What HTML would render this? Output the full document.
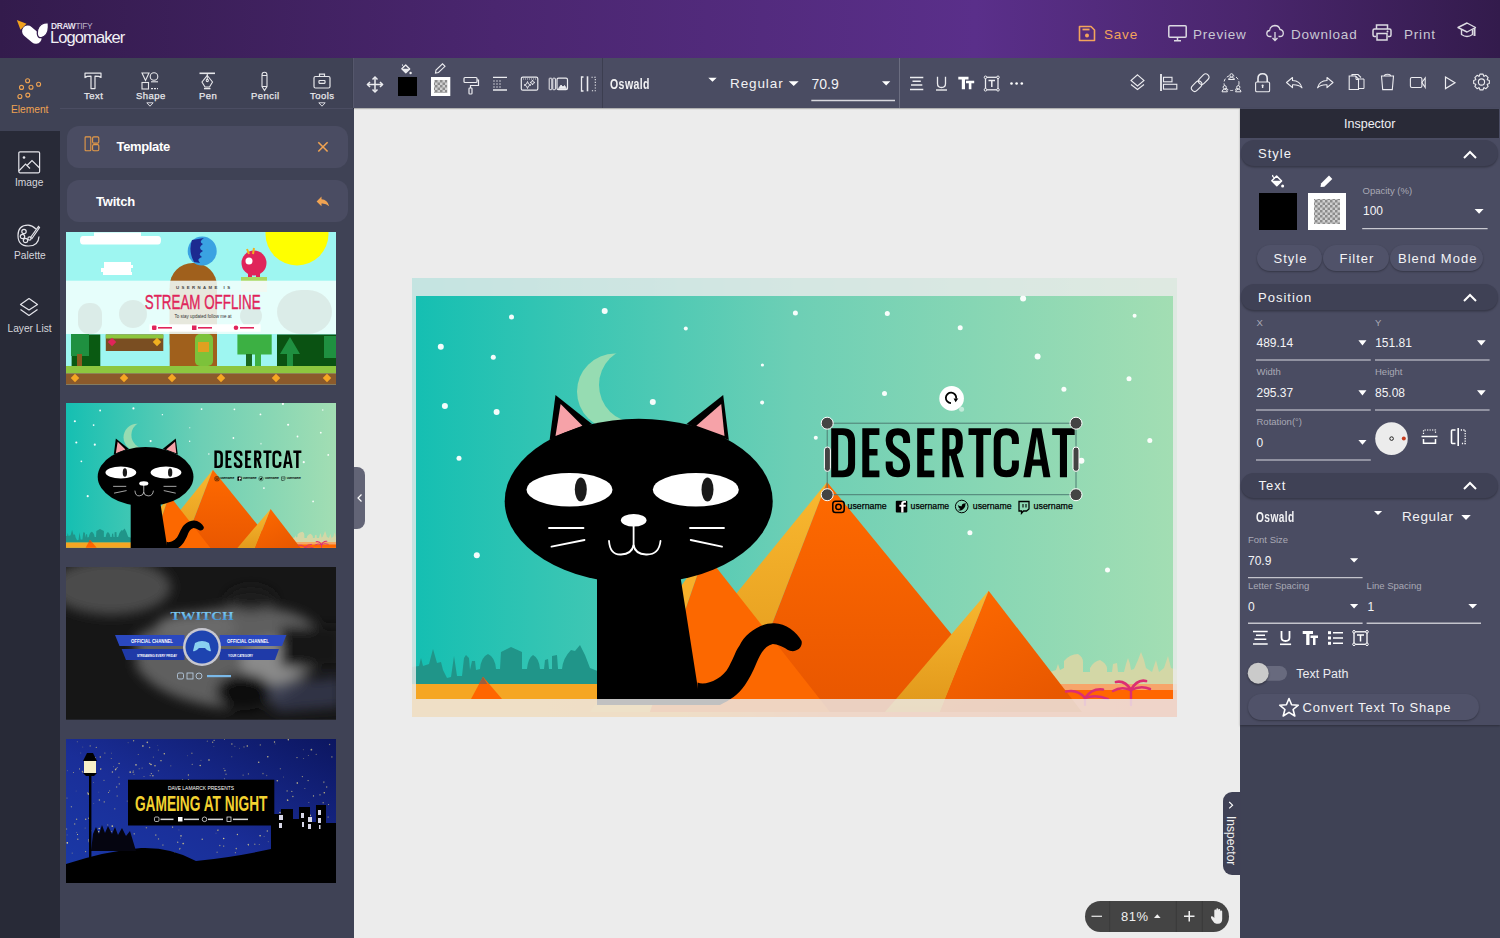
<!DOCTYPE html>
<html><head><meta charset="utf-8">
<style>
*{margin:0;padding:0;box-sizing:border-box}
html,body{width:1500px;height:938px;overflow:hidden;background:#ececec;font-family:"Liberation Sans",sans-serif}
.a{position:absolute}
#hdr{left:0;top:0;width:1500px;height:58px;background:linear-gradient(90deg,#331b4c 0%,#4a266f 33%,#5a2f8a 65%,#4a266d 83%,#331b4c 100%)}
#tb{left:353px;top:58px;width:1147px;height:50px;background:#4a4c62;box-shadow:0 1px 1px rgba(0,0,0,.25)}
#lp{left:60px;top:58px;width:294px;height:880px;background:#3f4255}
#ls{left:0;top:58px;width:60px;height:880px;background:#3f4255}
#lsd{left:0;top:131px;width:60px;height:807px;background:#282a37}
#ins{left:1240px;top:108px;width:260px;height:830px;background:#3f4255}
#insTop{left:1240px;top:108px;width:260px;height:617px;background:#4a4c62;box-shadow:0 1px 2px rgba(0,0,0,.3)}
.t{position:absolute;white-space:nowrap;line-height:1}
.lb{font-size:9.5px;color:#e8e8ec;letter-spacing:0.45px;-webkit-text-stroke:0.25px #e8e8ec}
.ls{font-size:10.2px;color:#d6d6dc}
.sh{background:#3f4155;border-radius:13px;box-shadow:0 1.5px 2px rgba(0,0,0,.28)}
.ih{font-size:13px;color:#f4f4f6;letter-spacing:1px}
.btn{background:#505269;border-radius:13px;box-shadow:0 1px 2px rgba(0,0,0,.3)}
.ib{font-size:13px;color:#f4f4f6;letter-spacing:1px}
.il{font-size:9.5px;color:#a9a9b5}
.iv{font-size:12px;color:#f4f4f6}
.hl{color:#c9c7d3;font-size:13px;letter-spacing:0.8px}
</style></head><body><svg width="0" height="0" style="position:absolute"><defs><pattern id="chk" width="5" height="5" patternUnits="userSpaceOnUse"><rect width="5" height="5" fill="#d0d0d0"/><rect width="2.5" height="2.5" fill="#8c8c8c"/><rect x="2.5" y="2.5" width="2.5" height="2.5" fill="#8c8c8c"/></pattern></defs></svg>
<div id="hdr" class="a"></div>
<div id="ls" class="a"></div>
<div id="lsd" class="a"></div>
<div id="lp" class="a"></div>
<div id="tb" class="a"></div>
<div id="ins" class="a"></div>
<div id="insTop" class="a"></div>

<!-- HEADER -->
<svg class="a" style="left:14px;top:18px" width="40" height="30" viewBox="0 0 40 30">
 <path d="M2.8 2 L12.5 5.8 L6.5 11.8 Z" fill="#f2a21f"/>
 <rect x="7" y="11" width="22" height="11.5" rx="5.75" transform="rotate(40 18 16.5)" fill="#fff"/>
 <path d="M23.3 15.8 Q22.8 7.5 30.5 5 L34.3 4.6 L34.4 9 Q34.3 17.5 27.5 19.6 Q23.8 20.2 23.3 15.8 Z" fill="#fff" stroke="#361d50" stroke-width="1.3"/>
</svg>
<div class="t" style="left:51px;top:21.8px;font-size:8.4px;color:#e6e1ee;font-weight:bold;letter-spacing:-0.3px">DRAW<span style="color:#bdb3c9;font-weight:normal">TIFY</span></div>
<div class="t" id="logoT" style="left:50px;top:28.6px;font-size:16.5px;color:#f2f0f5;letter-spacing:-0.9px">Logomaker</div>

<svg class="a" style="left:1078px;top:25px" width="18" height="17" viewBox="0 0 18 17" fill="none" stroke="#f3a45c" stroke-width="1.6">
 <path d="M1.5 1.5 H13 L16.5 5 V15.5 H1.5 Z" stroke-linejoin="round"/>
 <path d="M4.5 4.5 H11.5" stroke-width="1.8"/>
 <circle cx="9" cy="10.5" r="2" fill="#f3a45c" stroke="none"/>
</svg>
<div class="t hl" id="tSave" style="left:1104px;top:28.3px;font-size:13.5px;color:#f3a45c">Save</div>

<svg class="a" style="left:1168px;top:25px" width="19" height="17" viewBox="0 0 19 17" fill="none" stroke="#dcdae2" stroke-width="1.5">
 <rect x="0.8" y="0.8" width="17.4" height="11.4" rx="1"/>
 <path d="M9.5 12.5 V15.5 M6 15.8 H13"/>
</svg>
<div class="t hl" id="tPrev" style="left:1193px;top:28.3px;font-size:13.5px">Preview</div>

<svg class="a" style="left:1266px;top:24px" width="18" height="18" viewBox="0 0 18 18" fill="none" stroke="#dcdae2" stroke-width="1.3">
 <path d="M5.5 12.5 H4 Q0.8 12.5 0.8 9.5 Q0.8 6.8 3.6 6.5 Q4 2 8.8 1.5 Q13 1.5 14 5.5 Q17.3 6 17.3 9.2 Q17.2 12.5 14 12.5 H12.5"/>
 <path d="M9 8 V16.5 M6.5 14 L9 16.5 L11.5 14"/>
</svg>
<div class="t hl" id="tDown" style="left:1291px;top:28.3px;font-size:13.5px">Download</div>

<svg class="a" style="left:1372px;top:24px" width="20" height="17" viewBox="0 0 20 17" fill="none" stroke="#dcdae2" stroke-width="1.5">
 <path d="M4.5 5 V1 H15.5 V5"/>
 <path d="M4 12.5 H2.5 Q1 12.5 1 11 V6.5 Q1 5 2.5 5 H17.5 Q19 5 19 6.5 V11 Q19 12.5 17.5 12.5 H16"/>
 <rect x="5" y="9.5" width="10" height="6.5"/>
 <circle cx="15.5" cy="7.5" r="1" fill="#dcdae2" stroke="none"/>
</svg>
<div class="t hl" id="tPrint" style="left:1404px;top:28.3px;font-size:13.5px">Print</div>

<svg class="a" style="left:1457px;top:22px" width="20" height="17" viewBox="0 0 20 17" fill="none" stroke="#dcdae2" stroke-width="1.4" stroke-linejoin="round">
 <path d="M1 5.5 L10 1 L18.5 5.5 L10 10 Z"/>
 <path d="M4.5 7.5 V12.5 Q10 16.5 15.5 12.5 V7.5"/>
 <path d="M17.5 6 V14" stroke-width="2"/>
</svg>

<!-- LEFT TOOLS -->
<div class="a" style="left:60px;top:108px;width:293px;height:1px;background:#4b4d62"></div>
<svg class="a" style="left:15px;top:76px" width="30" height="25" viewBox="15 76 30 25" fill="none" stroke="#f0a352" stroke-width="1.1">
 <circle cx="27.6" cy="80.8" r="2"/><circle cx="38.6" cy="84.2" r="2"/><circle cx="21.5" cy="87.4" r="2"/>
 <circle cx="31" cy="87.2" r="2"/><circle cx="19.9" cy="96.5" r="2"/><circle cx="27.8" cy="95.1" r="2"/>
</svg>
<div class="t" id="lEl" style="left:11px;top:105.2px;font-size:10.2px;color:#f0a352">Element</div>

<svg class="a" style="left:84px;top:72px" width="18" height="18" viewBox="0 0 18 18" fill="none" stroke="#e6e6ea" stroke-width="1.2" stroke-linejoin="round">
 <path d="M1 1.2 H17 V5.5 Q15.5 4.2 11 4.2 V16.6 H7 V4.2 Q2.5 4.2 1 5.5 Z"/>
</svg>
<div class="t lb" id="lTxt" style="left:84px;top:90.6px">Text</div>

<svg class="a" style="left:141px;top:72px" width="18" height="18" viewBox="0 0 18 18" fill="none" stroke="#e6e6ea" stroke-width="1.1">
 <path d="M1 1 H8 L4.5 8.5 Z"/><circle cx="13" cy="4.5" r="3.8"/>
 <path d="M10 9.8 H17"/><rect x="1" y="10.5" width="6.5" height="6.5"/><path d="M10 16.6 H17" stroke-dasharray="2 1"/>
</svg>
<div class="t lb" id="lShp" style="left:136px;top:90.6px">Shape</div>
<svg class="a" style="left:146px;top:102px" width="8" height="5" viewBox="0 0 8 5"><path d="M0.8 0.8 H7.2 L4 4.2 Z" fill="none" stroke="#d8d8de" stroke-width="1"/></svg>

<svg class="a" style="left:199px;top:72px" width="17" height="18" viewBox="0 0 17 18" fill="none" stroke="#e6e6ea" stroke-width="1.1">
 <path d="M0.5 1.3 H16" stroke-width="1.6"/><path d="M8.3 1.5 V7.5"/><circle cx="8.3" cy="8.5" r="1.1"/>
 <path d="M8.3 3.5 L13.5 10 L10.5 15 H6 L3 10 Z"/><path d="M5 16.6 H11.5" stroke-width="1.4"/>
</svg>
<div class="t lb" id="lPen" style="left:199px;top:90.6px">Pen</div>

<svg class="a" style="left:260px;top:71px" width="9" height="21" viewBox="0 0 9 21" fill="none" stroke="#e6e6ea" stroke-width="1.1">
 <path d="M2 4 Q2 1.2 4.5 1.2 Q7 1.2 7 4 V15.5 L4.5 19.5 L2 15.5 Z"/><path d="M2 4.5 H7 M2 15.5 H7"/>
</svg>
<div class="t lb" id="lPcl" style="left:251px;top:90.6px">Pencil</div>

<svg class="a" style="left:313px;top:73px" width="18" height="16" viewBox="0 0 18 16" fill="none" stroke="#e6e6ea" stroke-width="1.2">
 <rect x="1" y="3.5" width="16" height="11.5" rx="1.5"/><path d="M6.5 3.5 V1.2 H11.5 V3.5"/><rect x="6" y="7.5" width="6" height="2.8" rx="0.5"/>
</svg>
<div class="t lb" id="lTls" style="left:310px;top:90.6px">Tools</div>
<svg class="a" style="left:318px;top:102px" width="8" height="5" viewBox="0 0 8 5"><path d="M0.8 0.8 H7.2 L4 4.2 Z" fill="none" stroke="#d8d8de" stroke-width="1"/></svg>

<!-- LEFT SIDEBAR -->
<svg class="a" style="left:18px;top:151px" width="23" height="23" viewBox="0 0 23 23" fill="none" stroke="#e4e4ea" stroke-width="1.2">
 <rect x="0.8" y="0.8" width="20.8" height="21" rx="1.2"/><circle cx="6" cy="6.5" r="1.3" fill="#e4e4ea" stroke="none"/>
 <path d="M0.8 20 L7.5 13 L12 17.5 M9 14.5 L14 9.5 L21.6 17"/>
</svg>
<div class="t ls" id="sImg" style="left:15px;top:178px">Image</div>
<svg class="a" style="left:17px;top:224px" width="24" height="24" viewBox="0 0 24 24" fill="none" stroke="#e4e4ea" stroke-width="1.2">
 <path d="M19 5 Q15 1.2 11 1.2 Q1 1.2 1 11.5 Q1 22 11.5 22 Q21.5 22 22 12.5"/>
 <circle cx="7" cy="7.5" r="2.2"/><circle cx="5.5" cy="12.5" r="2.2"/><circle cx="8.5" cy="16.5" r="2.2"/><circle cx="12.5" cy="14.5" r="1.6"/>
 <path d="M13.5 13.5 L21.5 2.5 L22.5 3.5 L15 14.5 Z"/>
</svg>
<div class="t ls" id="sPal" style="left:14px;top:251px">Palette</div>
<svg class="a" style="left:19px;top:297px" width="20" height="22" viewBox="0 0 20 22" fill="none" stroke="#e4e4ea" stroke-width="1.2" stroke-linejoin="round">
 <path d="M10 1.5 L18.5 7.5 L10 13 L1.5 7.5 Z"/><path d="M1.5 12.5 L10 18.5 L18.5 12.5"/>
</svg>
<div class="t ls" id="sLay" style="left:7.5px;top:324px">Layer List</div>

<!-- CANVAS SCENE -->
<svg class="a" style="left:412px;top:278px" width="765" height="439" viewBox="412 278 765 439">
<defs>
 <linearGradient id="sky" x1="0" y1="0" x2="1" y2="0"><stop offset="0" stop-color="#14bfb2"/><stop offset=".5" stop-color="#6dcfb5"/><stop offset="1" stop-color="#a3deb3"/></linearGradient>
 <linearGradient id="yel" x1="0" y1="0" x2="0" y2="1"><stop offset="0" stop-color="#f9b830"/><stop offset="1" stop-color="#e0971a"/></linearGradient>
 <linearGradient id="org" x1="0" y1="0" x2="1" y2="1"><stop offset="0" stop-color="#ff6c00"/><stop offset="1" stop-color="#e65200"/></linearGradient>
</defs>
<g id="dcScene"><rect x="412" y="278" width="765" height="439" fill="url(#sky)"/>
<!-- ground under -->
<linearGradient id="sand" x1="0" y1="0" x2="1" y2="0"><stop offset="0" stop-color="#ffa820"/><stop offset=".35" stop-color="#ffa020"/><stop offset=".55" stop-color="#ff7a30"/><stop offset="1" stop-color="#ff6a30"/></linearGradient><rect x="412" y="699" width="765" height="18" fill="url(#sand)"/>
<circle cx="511.5" cy="316.9" r="2.5" fill="#fff" opacity=".95"/><circle cx="604.7" cy="311" r="3" fill="#fff" opacity=".95"/><circle cx="440.8" cy="346.8" r="3" fill="#fff" opacity=".95"/><circle cx="493.3" cy="357.3" r="2.5" fill="#fff" opacity=".95"/><circle cx="685.8" cy="328.4" r="2" fill="#fff" opacity=".95"/><circle cx="795.4" cy="313" r="2.5" fill="#fff" opacity=".95"/><circle cx="762.4" cy="365" r="1.6" fill="#fff" opacity=".95"/><circle cx="444.9" cy="406" r="3" fill="#fff" opacity=".95"/><circle cx="496.6" cy="412" r="3" fill="#fff" opacity=".95"/><circle cx="652.8" cy="401.9" r="3" fill="#fff" opacity=".95"/><circle cx="762.1" cy="402.6" r="2" fill="#fff" opacity=".95"/><circle cx="459" cy="458.2" r="2.5" fill="#fff" opacity=".95"/>
<circle cx="887.3" cy="313.5" r="2.5" fill="#fff" opacity=".95"/><circle cx="1023.1" cy="298.6" r="3" fill="#fff" opacity=".95"/><circle cx="960.2" cy="327.7" r="2.5" fill="#fff" opacity=".95"/><circle cx="1134.6" cy="315.7" r="2" fill="#fff" opacity=".95"/><circle cx="1037.6" cy="356.5" r="3" fill="#fff" opacity=".95"/><circle cx="1129" cy="378.7" r="2.5" fill="#fff" opacity=".95"/><circle cx="884.5" cy="393.4" r="2.5" fill="#fff" opacity=".95"/><circle cx="1063.9" cy="389.2" r="2.5" fill="#fff" opacity=".95"/><circle cx="961.6" cy="409.2" r="2.5" fill="#fff" opacity=".5"/><circle cx="815.8" cy="437.7" r="2" fill="#fff" opacity=".95"/><circle cx="1149.8" cy="440.5" r="2.5" fill="#fff" opacity=".95"/><circle cx="1081.4" cy="460.7" r="3" fill="#fff" opacity=".95"/><circle cx="969.9" cy="532.8" r="2.5" fill="#fff" opacity=".95"/><circle cx="1107.5" cy="569.9" r="2.5" fill="#fff" opacity=".95"/><circle cx="476.8" cy="555.2" r="3" fill="#fff" opacity=".95"/>
<!-- moon -->
<mask id="moonm"><rect x="412" y="278" width="765" height="439" fill="#fff"/><circle cx="636.7" cy="385" r="37.7" fill="#000"/></mask><circle cx="615" cy="391.5" r="38" fill="#96dcb2" mask="url(#moonm)"/>
<!-- left city -->
<path d="M412 684 V667 L419 666 L421 658 L423 666 L429 664 L433 649 L437 663 L441 662 L443 670 L447 678 L451 677 L454 656 L457 676 L462 676 L464 658 L466 655 L469 658 L470 670 L472 661 L475 661 L476 670 L480 669 Q481 657 488 654 Q495 657 496 669 L500 669 L501 652 L511 647 L522 652 L522 669 L527 669 Q528 658 533 655 Q539 658 540 669 L544 669 L545 660 L548 659 L549 669 L552 669 L552 656 L557 655 L558 669 L562 669 Q563 658 571 650 L575 651 L580 645 L585 655 L590 668 L600 672 L600 684 Z" fill="#209589"/>
<!-- small pyramid far left -->

<!-- right far city -->
<path d="M1050 690 V672 L1056 670 L1058 664 L1060 670 L1064 668 L1064 661 Q1070 654 1078 654 Q1083 657 1083 662 L1083 672 L1090 672 L1090 668 Q1094 661 1100 660 Q1106 663 1107 668 L1107 672 L1112 672 L1113 664 L1117 663 L1118 672 L1124 672 L1126 664 L1128 658 L1130 664 L1131 670 L1134 669 L1138 660 L1141 652 L1144 660 L1146 668 L1152 672 L1156 660 L1159 672 L1164 668 L1168 656 L1171 668 L1177 670 V690 Z" fill="#d3d7a6"/>
<!-- ground -->
<rect x="412" y="684" width="765" height="15" fill="#f5a623"/>
<rect x="1000" y="684" width="177" height="6" fill="#f7a56a"/>
<rect x="1000" y="690" width="177" height="9" fill="#ff6600"/>
<path d="M483 676.7 L471 699 L502 699 Z" fill="#ff6600"/><path d="M483 676.7 L478.8 684 L487.3 684 Z" fill="#9a5e40"/>
<!-- big pyramid -->
<linearGradient id="org2" x1="0" y1="0" x2="0" y2="1"><stop offset="0" stop-color="#ff6a00"/><stop offset="1" stop-color="#e85600"/></linearGradient>
<path d="M827 482 L640 712 L738 712 Z" fill="url(#yel)"/>
<path d="M827 482 L738 712 L1015 712 Z" fill="url(#org2)"/>
<!-- small left pyramid -->
<path d="M705 553 L590 712 L650 712 Z" fill="#f7b02a"/>
<path d="M705 553 L650 712 L830 712 Z" fill="#fc6800"/>
<!-- small right pyramid -->
<path d="M988.6 590.8 L885 712 L940 712 Z" fill="url(#yel)"/>
<linearGradient id="org3" x1="0" y1="0" x2=".6" y2="1"><stop offset="0" stop-color="#ff6a00"/><stop offset="1" stop-color="#e85800"/></linearGradient><path d="M988.6 590.8 L940 712 L1082 712 Z" fill="url(#org3)"/>
<!-- palms -->
<g fill="none" stroke="#dc2f72" stroke-linecap="round">
 <path d="M1085 697 V705" stroke-width="2.2"/>
 <path d="M1085 698 Q1078 689 1066 691.5" stroke-width="2.6"/><path d="M1085 698 Q1092 688 1103 689.5" stroke-width="2.6"/>
 <path d="M1085 698 Q1096 694 1108 699" stroke-width="2.4"/>
 <path d="M1131 689 V705" stroke-width="2.4"/>
 <path d="M1131 690 Q1125 680 1116 682" stroke-width="2.8"/><path d="M1131 690 Q1137 679 1146 681" stroke-width="2.8"/>
 <path d="M1131 690 Q1121 686 1113 691" stroke-width="2.5"/><path d="M1131 690 Q1141 685 1150 689" stroke-width="2.5"/>
</g>
<!-- cat body -->
<path d="M597 560 L677.8 560 L700.5 705 L597 705 Z" fill="#000"/>
<path d="M697.6 682.5 C705 686 722 680 729 666.5 C734 657 736 650 739.7 645.2 C745 634 760 623 773.9 623.3 C785 623 797 632 801.6 641 C803 648 796 652 791 651 C786 650 783 645 772.8 644 C764 646 760 655 756.8 662.3 C753 672 749 679 745 685 C738 695 730 700 720 705 L697 705 Z" fill="#000"/>
<!-- ears -->
<path d="M555.5 395 L549.6 440 L592 424 Z" fill="#000"/>
<path d="M560.6 404 L555.5 436 L582.4 425.7 Z" fill="#f6a2a8"/>
<path d="M723.2 395 L728.8 440 L686.5 424 Z" fill="#000"/>
<path d="M721.2 404 L724.5 436 L696.3 425.7 Z" fill="#f6a2a8"/>
<!-- head -->
<ellipse cx="638.7" cy="501.2" rx="134" ry="82.4" fill="#000"/>
<ellipse cx="569.5" cy="489.7" rx="43" ry="16.7" fill="#fff"/>
<ellipse cx="695.8" cy="489.7" rx="43" ry="16.7" fill="#fff"/>
<ellipse cx="580.8" cy="489.5" rx="6" ry="12" fill="#1a1a1a"/>
<ellipse cx="707.5" cy="489.5" rx="6" ry="12" fill="#1a1a1a"/>
<ellipse cx="633.7" cy="520.3" rx="12.8" ry="6.3" fill="#fff"/>
<g stroke="#fff" stroke-width="1.8" fill="none" stroke-linecap="round">
 <path d="M633.6 524 V546"/>
 <path d="M609 541 Q610 555 621 554.5 Q632 554 633.6 545 Q635 554 646 554.5 Q659 555 660.5 541"/>
 <path d="M549 528 H583.5 M551.5 546.7 L584.5 540 M690 528 H724 M690.7 540 L722 546.7"/>
</g>
<!-- title -->
<g fill="#000" fill-rule="evenodd">
 <path d="M831.2 428.2 H843 Q855.1 428.2 855.1 441 V464.4 Q855.1 477.2 843 477.2 H831.2 Z M838.2 435 H842.2 Q848.1 435 848.1 442 V463.5 Q848.1 470.4 842.2 470.4 H838.2 Z"/>
 <path d="M862.3 428.2 H879.4 V435 H869.3 V449 H877.5 V455.6 H869.3 V470.4 H879.4 V477.2 H862.3 Z"/>
 <path d="M942.4 428.2 H953 Q962.8 428.2 962.8 440 V443 Q962.8 452 956.8 454.2 L964 477.2 H956.8 L950.6 455.8 H949.4 V477.2 H942.4 Z M949.4 435 H952.4 Q955.8 435 955.8 440 V444 Q955.8 449.2 952.4 449.2 H949.4 Z"/>
 <path d="M968.5 428.2 H991 V435 H983.3 V477.2 H976.2 V435 H968.5 Z"/>
 <path d="M1052.2 428.2 H1074.7 V435 H1067 V477.2 H1059.9 V435 H1052.2 Z"/>
 <path d="M1023.4 477.2 L1032.4 428.2 H1041.4 L1050.4 477.2 H1043.4 L1041.5 465.8 H1032.3 L1030.4 477.2 Z M1033.3 459.4 H1040.5 L1036.9 436.5 Z"/>
</g>
<path d="M917.2 428.2 H934.3 V435 H924.2 V449 H932.4 V455.6 H924.2 V470.4 H934.3 V477.2 H917.2 Z" fill="#000"/>
<g fill="none" stroke="#000" stroke-width="7">
 <path d="M906.6 443 V440 Q906.6 431.7 897.9 431.7 Q889.2 431.7 889.2 440.5 Q889.2 447.5 896 451.5 L900.5 454.5 Q906.6 458.5 906.6 465.5 Q906.6 473.7 897.9 473.7 Q889.2 473.7 889.2 465 V461.5"/>
 <path d="M1015.4 444 V440.5 Q1015.4 431.7 1006.3 431.7 Q997.2 431.7 997.2 440.5 V465 Q997.2 473.7 1006.3 473.7 Q1015.4 473.7 1015.4 465 V460.5"/>
</g>
<!-- social -->
<g fill="none" stroke="#000" stroke-width="1.5">
 <rect x="832.8" y="501.2" width="11.4" height="11.4" rx="2.8"/><circle cx="838.5" cy="506.9" r="2.7"/>
 <circle cx="961.7" cy="506.5" r="6.3" stroke-width="1"/>
 <path d="M1019 501.5 H1029 V509 L1026.5 511 H1023.5 L1021.5 513.2 V511 H1019 Z" stroke-width="1.3"/>
 <path d="M1023 504 V507.5 M1026 504 V507.5" stroke-width="1.1"/>
</g>
<rect x="895.8" y="500.8" width="11.5" height="11.8" rx="1" fill="#000"/>
<path d="M903.5 512.6 V506.8 H905.6 L905.9 504.8 H903.5 V503.6 Q903.5 502.8 904.4 502.8 H906 V501 H903.8 Q901.2 501 901.2 503.6 V504.8 H899.4 V506.8 H901.2 V512.6 Z" fill="#fff"/>
<path d="M957.8 505 Q960 506.5 961.7 506.3 Q961.8 503.2 964.8 503.6 L966 503 L965.4 504.2 Q965.6 508 962 510 Q959.5 511.2 957.5 509.8 Q959.5 509.8 960.5 508.9 Q958.3 508.2 958.4 506.5 Z" fill="#000"/>
<g font-family="Liberation Sans" font-size="9.6" fill="#000" stroke="#000" stroke-width="0.25">
 <text x="847.6" y="508.7" textLength="39" lengthAdjust="spacingAndGlyphs">username</text>
 <text x="910.6" y="508.7" textLength="38.6" lengthAdjust="spacingAndGlyphs">username</text>
 <text x="972.8" y="508.7" textLength="38.8" lengthAdjust="spacingAndGlyphs">username</text>
 <text x="1033.6" y="508.7" textLength="39.2" lengthAdjust="spacingAndGlyphs">username</text>
</g>
</g>
<!-- overlay outside artboard -->
<path d="M412 278 H1177 V717 H412 Z M416 296 V699 H1173 V296 Z" fill="#ececec" opacity=".82" fill-rule="evenodd"/>
<!-- selection -->
<rect x="827.2" y="423.2" width="248.8" height="71.5" fill="none" stroke="#4d7d73" stroke-width="1"/>
<g fill="#444" stroke="#fff" stroke-width="1">
 <circle cx="827.2" cy="423.2" r="6"/><circle cx="1076" cy="423.2" r="6"/><circle cx="827.2" cy="494.7" r="6"/><circle cx="1076" cy="494.7" r="6"/>
 <rect x="824.4" y="447" width="6" height="24.4" rx="3"/><rect x="1073" y="447" width="6" height="24.4" rx="3"/>
</g>
<circle cx="951.6" cy="398.4" r="12.3" fill="#fff"/>
<path d="M951 403.1 A5.2 5.2 0 1 1 956.2 398.6" fill="none" stroke="#000" stroke-width="1.8"/>
<path d="M953.6 398.6 L958.3 398.6 L955.6 402.2 Z" fill="#000"/>
</svg>

<!-- MAIN TOOLBAR -->
<svg class="a" style="left:353px;top:58px" width="1147" height="50" viewBox="353 58 1147 50" fill="none" stroke="#ececf0" stroke-width="1.2">
 <line x1="353.5" y1="58" x2="353.5" y2="108" stroke="#55576c" stroke-width="1"/>
 <!-- move -->
 <path d="M375 77 V92 M367.5 84.5 H382.5" stroke-width="1.5"/>
 <path d="M372.5 79.5 L375 77 L377.5 79.5 M372.5 89.5 L375 92 L377.5 89.5 M370 82 L367.5 84.5 L370 87 M380 82 L382.5 84.5 L380 87" stroke-width="1.5"/>
 <!-- bucket -->
 <path d="M401.8 68.8 L405.7 65 L409.7 69 L405.8 72.8 Z" stroke-width="1.3" stroke-linejoin="round"/>
 <path d="M401.8 68.8 H409.7 L405.8 72.8 Z" fill="#ececf0" stroke="none"/>
 <path d="M403.8 66.8 L402.6 65.5 Q402.1 64.6 402.9 64.3" stroke-width="1"/><circle cx="410.6" cy="73" r="1.2" fill="#ececf0" stroke="none"/>
 <rect x="398" y="77" width="19" height="19" fill="#000" stroke="none"/>
 <!-- pencil -->
 <path d="M435.5 73 L436 70 L442.5 63.8 L445 66.3 L438.5 72.5 Z" stroke-width="1.1"/>
 <rect x="431" y="77" width="19.3" height="19" fill="#fff" stroke="none"/>
 <rect x="434" y="80" width="13.3" height="13" fill="url(#chk)" stroke="none"/>
 <!-- roller -->
 <rect x="464" y="77.5" width="13" height="5" rx="1"/><path d="M477 80 H478.5 V85.5 H470.5 V88"/><rect x="469" y="88" width="3" height="6" rx="0.8"/>
 <!-- lines -->
 <path d="M493 77.3 H507 M493 90 H507" stroke-width="1.3"/>
 <g fill="#ececf0" stroke="none"><circle cx="494" cy="81" r=".7"/><circle cx="497" cy="81" r=".7"/><circle cx="500" cy="81" r=".7"/><circle cx="494" cy="84" r=".7"/><circle cx="497" cy="84" r=".7"/><circle cx="500" cy="84" r=".7"/><circle cx="494" cy="87" r=".7"/><circle cx="497" cy="87" r=".7"/><circle cx="500" cy="87" r=".7"/></g>
 <!-- image sparkle -->
 <rect x="521.3" y="77.2" width="16.5" height="13" rx="1.5"/><path d="M523 79 H536" stroke-dasharray="1 1" stroke-width=".8"/>
 <path d="M527.5 81.5 L528.5 84 L531 85 L528.5 86 L527.5 88.5 L526.5 86 L524 85 L526.5 84 Z M532.5 80 L533.2 81.8 L535 82.5 L533.2 83.2 L532.5 85 L531.8 83.2 L530 82.5 L531.8 81.8 Z" stroke-width=".9"/>
 <!-- image bar -->
 <rect x="549.2" y="78.2" width="2.6" height="11.5" rx="0.5" stroke-width="1"/><rect x="552.8" y="78.2" width="2.6" height="11.5" rx="0.5" stroke-width="1"/>
 <rect x="557" y="78.2" width="10.5" height="11.5" rx="1.5"/><path d="M558.5 88.5 L561 85 L563 87 L564.5 85.5 L566.5 88.5 Z" fill="#ececf0" stroke-width=".8"/>
 <!-- split -->
 <path d="M583.5 77 H581.5 V91 H583.5" stroke-width="1.3"/><path d="M587.5 76.3 V91.3" stroke-width="1.6"/>
 <path d="M591.5 77.2 H595.3 V90.8 H591.5" stroke-dasharray="1.2 1.6" stroke-width="1.1"/>
 <line x1="602.5" y1="58" x2="602.5" y2="108" stroke="#3c3e50" stroke-width="1"/>
 <!-- triangles -->
 <path d="M708.3 77.7 H716.7 L712.5 81.8 Z M788.7 81.3 H798.7 L793.7 86 Z M882 81.3 H890.3 L886.2 85.5 Z" fill="#fff" stroke="none"/>
 <path d="M811.3 100.5 H895" stroke="#d8d8de" stroke-width="1.3"/>
 <line x1="899.5" y1="58" x2="899.5" y2="108" stroke="#6b6d80" stroke-width="1"/>
 <!-- align center -->
 <path d="M910 77.5 H923.3 M912.5 81.3 H920.8 M911 85 H922.3 M910 89.5 H923.3" stroke-width="1.4"/>
 <!-- underline U -->
 <path d="M937.5 76.7 V83.5 Q937.5 87.5 941.5 87.5 Q945.5 87.5 945.5 83.5 V76.7" stroke-width="1.3"/><path d="M936 90 H947" stroke-width="1.4"/>
 <!-- TT -->
 <path d="M958.3 76.7 H968.5 V79.5 H965 V89.3 H961.8 V79.5 H958.3 Z M966 80.8 H974.2 V83.2 H971.4 V89.3 H968.8 V83.2 H966 Z" fill="#fff" stroke="none"/>
 <!-- T box -->
 <rect x="985.5" y="77.3" width="12.5" height="12.5" stroke-width="1.3"/>
 <g fill="#4a4c62" stroke-width="1"><circle cx="985.5" cy="77.3" r="1.3"/><circle cx="998" cy="77.3" r="1.3"/><circle cx="985.5" cy="89.8" r="1.3"/><circle cx="998" cy="89.8" r="1.3"/></g>
 <path d="M988.5 80.5 H995 M991.8 80.5 V87" stroke-width="1.5"/>
 <g fill="#fff" stroke="none"><circle cx="1011.5" cy="83.5" r="1.3"/><circle cx="1016.6" cy="83.5" r="1.3"/><circle cx="1021.8" cy="83.5" r="1.3"/></g>
 <!-- right icons -->
 <path d="M1137.5 74.8 L1144 80.5 L1137.5 86 L1131 80.5 Z" stroke-width="1.1"/><path d="M1131 84.5 L1137.5 89.5 L1144 84.5" stroke-width="1.1"/>
 <path d="M1161 74 V91" stroke-width="1.8"/><rect x="1163.5" y="77.3" width="8.5" height="4.5" stroke-width="1.1"/><rect x="1163.5" y="84.3" width="13.3" height="4.8" stroke-width="1.1"/>
 <g transform="rotate(-45 1200 82.5)" stroke-width="1.1"><rect x="1189" y="79.5" width="12" height="6.5" rx="3.25"/><rect x="1199" y="79.5" width="12" height="6.5" rx="3.25"/></g>
 <circle cx="1231.5" cy="83" r="7.5" stroke-dasharray="3 2" stroke-width="1"/>
 <g fill="#4a4c62" stroke-width="1"><circle cx="1231.5" cy="75.3" r="1.6"/><path d="M1228.5 79.5 Q1228.5 77.5 1231.5 77.5 Q1234.5 77.5 1234.5 79.5 Z"/><circle cx="1224.7" cy="87.2" r="1.6"/><path d="M1222 91.8 Q1222 89.3 1224.7 89.3 Q1227.4 89.3 1227.4 91.8 Z"/><circle cx="1238.3" cy="87.2" r="1.6"/><path d="M1235.6 91.8 Q1235.6 89.3 1238.3 89.3 Q1241 89.3 1241 91.8 Z"/></g>
 <rect x="1255.6" y="82" width="14" height="9.8" rx="1.3" stroke-width="1.1"/><path d="M1258 82 V78.5 Q1258 73.8 1262.6 73.8 Q1267.2 73.8 1267.2 78.5 V82" stroke-width="1.6"/><path d="M1262.6 85 V88" stroke-width="1.4"/><circle cx="1262.6" cy="85.5" r="1" fill="#ececf0" stroke="none"/>
 <path d="M1286.5 82.5 L1292.5 77.5 V80.5 Q1300 80.5 1302 87.8 Q1298.5 84.5 1292.5 84.8 V87.7 Z" stroke-width="1.1" stroke-linejoin="round"/>
 <path d="M1333 82.5 L1327 77.5 V80.5 Q1319.5 80.5 1317.5 87.8 Q1321 84.5 1327 84.8 V87.7 Z" stroke-width="1.1" stroke-linejoin="round"/>
 <path d="M1349.2 76 H1355.5 L1358.5 79 V89.5 H1349.2 Z M1352 76 V74.5 H1358 L1361 77.5" stroke-width="1.1"/><path d="M1356 76.2 V79.5 H1359 M1358.5 79 H1364 V88.5 H1358.5" stroke-width="1"/>
 <path d="M1381.5 76 H1393.5 L1392.3 89.6 H1382.7 Z" stroke-width="1.1"/><path d="M1384.5 76 Q1384.5 74.3 1387.5 74.3 Q1390.5 74.3 1390.5 76" stroke-width="1.1"/>
 <rect x="1410.4" y="77.5" width="11.5" height="10" rx="1.5" stroke-width="1.1"/><path d="M1421.9 82.5 L1425.2 78 V87.5 Z" stroke-width="1.1"/>
 <path d="M1445.5 77 L1455 82.8 L1445.5 88.6 Z" stroke-width="1.2"/>
 <circle cx="1481.5" cy="82" r="3.1" stroke-width="1.1"/>
 <path d="M1487.30 79.82 L1489.34 80.41 L1489.34 83.59 L1487.30 84.18 L1487.15 84.56 L1488.17 86.42 L1485.92 88.67 L1484.06 87.65 L1483.68 87.80 L1483.09 89.84 L1479.91 89.84 L1479.32 87.80 L1478.94 87.65 L1477.08 88.67 L1474.83 86.42 L1475.85 84.56 L1475.70 84.18 L1473.66 83.59 L1473.66 80.41 L1475.70 79.82 L1475.85 79.44 L1474.83 77.58 L1477.08 75.33 L1478.94 76.35 L1479.32 76.20 L1479.91 74.16 L1483.09 74.16 L1483.68 76.20 L1484.06 76.35 L1485.92 75.33 L1488.17 77.58 L1487.15 79.44 Z" stroke-width="1.1" stroke-linejoin="round"/>
</svg>
<div class="t" id="fOsw" style="left:610px;top:75.5px;font-size:15.5px;color:#f2f2f4;font-weight:bold;transform:scaleX(0.68);transform-origin:0 0;letter-spacing:0.6px">Oswald</div>
<div class="t" id="fReg" style="left:730px;top:77px;font-size:13.5px;color:#f2f2f4;letter-spacing:0.9px">Regular</div>
<div class="t" id="fSz" style="left:811.5px;top:76.5px;font-size:14px;color:#f2f2f4">70.9</div>

<!-- INSPECTOR -->
<div class="a" style="left:1240px;top:109px;width:259px;height:29px;background:#292a37"></div>
<div class="t" id="iHd" style="left:1344px;top:118px;font-size:12.5px;color:#f0f0f4">Inspector</div>
<div class="a sh" style="left:1241px;top:140px;width:257px;height:26px"></div>
<div class="t ih" id="iSty" style="left:1258px;top:147px">Style</div>
<div class="a sh" style="left:1241px;top:284px;width:257px;height:25.5px"></div>
<div class="t ih" id="iPos" style="left:1258px;top:291px">Position</div>
<div class="a sh" style="left:1241px;top:472.5px;width:257px;height:25.5px"></div>
<div class="t ih" id="iTxt" style="left:1258.5px;top:478.5px">Text</div>
<svg class="a" style="left:1240px;top:108px" width="260" height="620" viewBox="1240 108 260 620" fill="none" stroke="#fff">
 <path d="M1464 158 L1470 152 L1476 158 M1464 301 L1470 295 L1476 301 M1464 489 L1470 483 L1476 489" stroke-width="2"/>
 <!-- bucket -->
 <path d="M1271.8 180.8 L1276.6 176 L1281.6 181 L1276.8 185.8 Z" stroke-width="1.5" stroke-linejoin="round"/>
 <path d="M1271.8 180.8 H1281.6 L1276.8 185.8 Z" fill="#fff" stroke="none"/>
 <path d="M1274.5 178.2 L1272.8 176.5 Q1272.2 175.5 1273.2 175.2" stroke-width="1.2"/>
 <circle cx="1282.6" cy="186" r="1.5" fill="#fff" stroke="none"/>
 <path d="M1320.5 187 L1321 183.6 L1329 175.6 L1332.3 178.9 L1324.3 186.8 Z" fill="#fff" stroke="none"/>
 <rect x="1259" y="193" width="38" height="37" fill="#000" stroke="none"/>
 <rect x="1308" y="193" width="38" height="37" fill="#fff" stroke="none"/>
 <rect x="1314" y="199" width="26" height="25" fill="url(#chk)" stroke="none"/>
 <path d="M1474.6 209 H1483.6 L1479.1 213.7 Z" fill="#fff" stroke="none"/>
 <path d="M1362.2 228.6 H1487.6" stroke="#c8c8d0" stroke-width="1.3"/>
 <!-- position triangles + underlines -->
 <g fill="#fff" stroke="none">
  <path d="M1358.4 340.3 H1366.5 L1362.45 345.5 Z M1477 340.3 H1485.7 L1481.35 345.5 Z"/>
  <path d="M1358.4 390.3 H1366.5 L1362.45 395.5 Z M1477 390.3 H1485.7 L1481.35 395.5 Z"/>
  <path d="M1358.4 440 H1366.5 L1362.45 444.8 Z"/>
  <path d="M1374 511 H1382.1 L1378 515.1 Z M1461.3 515.1 H1470.8 L1466 519.9 Z"/>
  <path d="M1350 558.2 H1358.2 L1354.1 562.6 Z M1350 604 H1358.2 L1354.1 608.4 Z M1468.3 604 H1477.1 L1472.7 608.4 Z"/>
 </g>
 <g stroke="#a9a9b6" stroke-width="1.6">
  <path d="M1256 360 H1370.8 M1375 360 H1489.6 M1256 410 H1370.8 M1375 410 H1489.6 M1256 460 H1370.8"/>
 </g>
 <g stroke="#c4c4cc" stroke-width="1.4">
  <path d="M1248 577.6 H1362.6 M1248 623.3 H1362.6 M1366.6 623.3 H1481"/>
 </g>
 <!-- dial -->
 <circle cx="1391.5" cy="438.6" r="16.3" fill="#ececec" stroke="none"/>
 <circle cx="1391.6" cy="438.6" r="1.8" stroke="#222" stroke-width="1"/>
 <circle cx="1403.8" cy="438.6" r="2" fill="#c83c1e" stroke="none"/>
 <!-- distribute -->
 <path d="M1421.5 436.5 H1437.5" stroke-width="1.5"/>
 <path d="M1423.5 434 V430 H1435.5 V434" stroke-width="1.2" stroke-dasharray="1.3 1.2"/>
 <path d="M1423.5 439 V443.3 H1435.5 V439" stroke-width="1.5"/>
 <!-- flip -->
 <path d="M1458.2 428 V446" stroke-width="1.6"/>
 <path d="M1455.5 430 H1452.3 Q1451.5 430 1451.5 431 V442.5 Q1451.5 443.5 1452.3 443.5 H1455.5" stroke-width="1.6"/>
 <path d="M1460.8 430 H1465.2 V443.5 H1460.8" stroke-width="1.3" stroke-dasharray="1.2 1.3"/>
 <!-- text icons -->
 <path d="M1253 631.5 H1267.7 M1256 635.3 H1265 M1254.5 639.2 H1266.3 M1253 644 H1267.7" stroke-width="1.6"/>
 <path d="M1281.5 631 V637.5 Q1281.5 641 1285.5 641 Q1289.5 641 1289.5 637.5 V631" stroke-width="1.8"/><path d="M1280 644.3 H1291.1" stroke-width="1.6"/>
 <path d="M1302.7 631 H1313 V634 H1309.5 V645 H1306.2 V634 H1302.7 Z M1310.5 635.5 H1318 V638 H1315.5 V645 H1313 V638 H1310.5 Z" fill="#fff" stroke="none"/>
 <g fill="#fff" stroke="none"><rect x="1328" y="631.2" width="3" height="3"/><rect x="1328" y="636.5" width="3" height="3"/><rect x="1328" y="641.8" width="3" height="3"/></g>
 <path d="M1333 632.7 H1343 M1333 638 H1343 M1333 643.3 H1343" stroke-width="1.6"/>
 <rect x="1354" y="631.8" width="13" height="12.5" stroke-width="1.3"/>
 <g fill="#4a4c62" stroke-width="1"><circle cx="1354" cy="631.8" r="1.3"/><circle cx="1367" cy="631.8" r="1.3"/><circle cx="1354" cy="644.3" r="1.3"/><circle cx="1367" cy="644.3" r="1.3"/></g>
 <path d="M1357 635 H1364 M1360.5 635 V641.5" stroke-width="1.5"/>
 <!-- toggle -->
 <rect x="1252" y="666" width="35" height="14.7" rx="7.35" fill="#686a7e" stroke="none"/>
 <circle cx="1258.2" cy="673.2" r="10.5" fill="#cacaca" stroke="none" style="filter:drop-shadow(0 1px 1px rgba(0,0,0,.4))"/>
</svg>
<div class="a btn" style="left:1256.5px;top:245px;width:65.3px;height:26px"></div>
<div class="a btn" style="left:1323.2px;top:245px;width:65.5px;height:26px"></div>
<div class="a btn" style="left:1389.9px;top:245px;width:92.7px;height:26px"></div>
<div class="t ib" id="bSty" style="left:1273.5px;top:252px">Style</div>
<div class="t ib" id="bFil" style="left:1339.5px;top:252px">Filter</div>
<div class="t ib" id="bBle" style="left:1398px;top:252px">Blend Mode</div>
<div class="t il" style="left:1362.5px;top:185.5px">Opacity (%)</div>
<div class="t iv" id="vOp" style="left:1363px;top:205px">100</div>
<div class="t il" style="left:1256.5px;top:317.5px">X</div>
<div class="t il" style="left:1375px;top:317.5px">Y</div>
<div class="t iv" id="vX" style="left:1256.5px;top:337px">489.14</div>
<div class="t iv" id="vY" style="left:1375.2px;top:337px">151.81</div>
<div class="t il" style="left:1256.5px;top:367px">Width</div>
<div class="t il" style="left:1375px;top:367px">Height</div>
<div class="t iv" id="vW" style="left:1256.5px;top:386.5px">295.37</div>
<div class="t iv" id="vH" style="left:1375px;top:386.5px">85.08</div>
<div class="t il" style="left:1256.5px;top:417px">Rotation(°)</div>
<div class="t iv" style="left:1256.5px;top:436.5px">0</div>
<div class="t" id="iOsw" style="left:1255.5px;top:509px;font-size:15px;color:#f2f2f4;font-weight:bold;transform:scaleX(0.68);transform-origin:0 0;letter-spacing:0.6px">Oswald</div>
<div class="t" id="iReg" style="left:1402px;top:509.5px;font-size:13.5px;color:#f2f2f4;letter-spacing:0.6px">Regular</div>
<div class="t il" style="left:1248px;top:535px">Font Size</div>
<div class="t iv" style="left:1248px;top:554.5px">70.9</div>
<div class="t il" style="left:1248px;top:581px">Letter Spacing</div>
<div class="t il" style="left:1366.6px;top:581px">Line Spacing</div>
<div class="t iv" style="left:1248px;top:600.5px">0</div>
<div class="t iv" style="left:1367.5px;top:600.5px">1</div>
<div class="t" id="tPath" style="left:1296.3px;top:667.5px;font-size:12.5px;color:#ececf0">Text Path</div>
<div class="a btn" style="left:1247.8px;top:694.2px;width:231.4px;height:26px"></div>
<svg class="a" style="left:1278px;top:697px" width="22" height="21" viewBox="0 0 22 21"><path d="M11 1.5 L13.6 7.8 L20.3 8.2 L15.1 12.5 L16.8 19 L11 15.4 L5.2 19 L6.9 12.5 L1.7 8.2 L8.4 7.8 Z" fill="none" stroke="#fff" stroke-width="1.6" stroke-linejoin="round"/></svg>
<div class="t ib" id="bConv" style="left:1302.4px;top:700.5px;letter-spacing:0.85px">Convert Text To Shape</div>

<!-- LEFT PANEL CARDS -->
<div class="a" style="left:66.5px;top:126px;width:281.5px;height:42px;background:#4a4c62;border-radius:12px"></div>
<div class="a" style="left:66.5px;top:180px;width:281.5px;height:42px;background:#4a4c62;border-radius:12px"></div>
<svg class="a" style="left:84px;top:136px" width="16" height="16" viewBox="84 136 16 16" fill="none" stroke="#e59a48" stroke-width="1.1">
 <rect x="85.1" y="136.9" width="5.7" height="13.8" rx=".8"/><rect x="92.6" y="136.9" width="6.2" height="6.2" rx="1.2"/><rect x="92.6" y="144.6" width="6.2" height="6.1" rx="1.2"/>
</svg>
<div class="t" id="cTpl" style="left:116.5px;top:139.5px;font-size:13px;color:#fff;font-weight:bold;letter-spacing:-0.35px">Template</div>
<svg class="a" style="left:316px;top:140px" width="14" height="14" viewBox="316 140 14 14"><path d="M318.3 142.3 L327.6 151.5 M327.6 142.3 L318.3 151.5" stroke="#f0a352" stroke-width="1.6"/></svg>
<div class="t" id="cTw" style="left:96px;top:194.5px;font-size:13px;color:#fff;font-weight:bold;letter-spacing:-0.2px">Twitch</div>
<svg class="a" style="left:316px;top:195px" width="14" height="12" viewBox="316 195 14 12"><path d="M316.6 201.5 L321.5 196.4 V199.2 Q327.5 199.5 329.2 206.2 Q326 203.3 321.5 203.6 V206.3 Z" fill="#f0a352"/></svg>


<!-- THUMBNAILS -->
<svg class="a" style="left:65.7px;top:232px" width="270.6" height="152.6" viewBox="0 0 270.6 152.6">
 <rect width="270.6" height="152.6" fill="#9ef6f1"/>
 <path d="M17 4 H28 V0.5 H75 V4 H92 Q95 4 95 8 Q95 12.6 92 12.6 H17 Q14 12.6 14 8.5 Q14 4 17 4 Z" fill="#fff"/>
 <path d="M38 30 H65 V33 H67 V36 H65 V40 H66 V43 H37 V40 H35 V36 H38 Z" fill="#fff"/>
 <circle cx="231" cy="2" r="31.5" fill="#ffff00"/>
 <rect x="103.7" y="31" width="47.3" height="103" rx="23" fill="#a0601c"/>
 <rect x="103.7" y="56" width="47.3" height="78" fill="#a0601c"/>
 <circle cx="136.2" cy="19.1" r="14.5" fill="#3aa2e2"/><path d="M126 8 Q122 19 128 30 L134 31 Q130 27 136 25 Q131 22 137 19 Q131 16 137 12 Q132 10 138 6 Z" fill="#1c2a90"/>
 <circle cx="188" cy="31" r="12.5" fill="#e0245a"/><rect x="182" y="36" width="4" height="9" fill="#e0245a"/><rect x="190" y="36" width="4" height="9" fill="#e0245a"/>
 <circle cx="183" cy="29" r="3.5" fill="#fff"/><path d="M181 17 L183 22 M188 16 L187 22" stroke="#f0b020" stroke-width="2"/>
 <rect x="175" y="45" width="26" height="4" fill="#a8d860"/><rect x="175" y="49" width="26" height="11" fill="#e8d0b0"/>
 <rect x="5.6" y="102.5" width="28.7" height="31.5" fill="#0a5a12"/><rect x="5" y="102" width="18" height="22" fill="#1f9040"/><rect x="11" y="122" width="5" height="12" fill="#8a5a20"/>
 <rect x="39.8" y="102.5" width="57.5" height="16.5" fill="#7a4e22"/><rect x="39.8" y="102.5" width="57.5" height="4" fill="#8cc63f"/>
 <rect x="43" y="107" width="6" height="6" transform="rotate(45 46 110)" fill="#e0245a"/><rect x="88" y="107" width="6" height="6" transform="rotate(45 91 110)" fill="#f0b020"/>
 <rect x="129" y="102" width="18" height="32" rx="5" fill="#7cc23a"/><rect x="132" y="110" width="11" height="10" fill="#e0a020"/>
 <rect x="171.4" y="102.5" width="34.3" height="20" fill="#3cb043"/><rect x="180" y="122" width="6" height="12" fill="#1a6a20"/><rect x="189" y="122" width="6" height="12" fill="#3cb043"/>
 <rect x="211" y="102.5" width="59.6" height="31.5" fill="#0a5212"/><path d="M221 134 V122 H214 L224 105 L234 122 H227 V134 Z" fill="#1f9040"/><rect x="258" y="104" width="12.6" height="22" fill="#1f9040"/>
 <rect x="0" y="48.7" width="270.6" height="53.3" fill="#f2fffd" opacity=".86"/>
 <g opacity=".22" fill="#b8b0a8"><rect x="12" y="71" width="24" height="31" rx="11"/><circle cx="67" cy="82" r="14"/><rect x="211" y="58" width="55" height="44" rx="24"/><circle cx="185" cy="84" r="11"/></g>
 <text x="110" y="57.3" font-family="Liberation Sans" font-size="4.3" font-weight="bold" fill="#444" textLength="54" lengthAdjust="spacing">USERNAME IS</text>
 <text x="78.8" y="77.5" font-family="Liberation Sans" font-size="20.5" fill="#e0245a" textLength="115.8" lengthAdjust="spacingAndGlyphs" stroke="#e0245a" stroke-width=".4">STREAM OFFLINE</text>
 <text x="108.4" y="86" font-family="Liberation Sans" font-size="4.6" fill="#333" textLength="57" lengthAdjust="spacingAndGlyphs">To stay updated follow me at</text>
 <rect x="83.4" y="92.3" width="111.2" height="7.4" fill="#fff"/>
 <g fill="#e0245a"><rect x="86" y="93.5" width="4.5" height="4.5" rx="1"/><rect x="126" y="93.5" width="4.5" height="4.5"/><circle cx="170" cy="95.8" r="2.3"/>
 <rect x="92" y="95" width="14" height="1.6"/><rect x="132" y="95" width="14" height="1.6"/><rect x="174" y="95" width="14" height="1.6"/></g>
 <rect x="0" y="134" width="270.6" height="7.3" fill="#8dc63f"/>
 <rect x="0" y="141.3" width="270.6" height="11.3" fill="#8b5a2b"/>
 <g fill="#f5a623"><rect x="6" y="143" width="6" height="6" transform="rotate(45 9 146)"/><rect x="55" y="143" width="6" height="6" transform="rotate(45 58 146)"/><rect x="103" y="143" width="6" height="6" transform="rotate(45 106 146)"/><rect x="152" y="143" width="6" height="6" transform="rotate(45 155 146)"/><rect x="207" y="143" width="6" height="6" transform="rotate(45 210 146)"/><rect x="258" y="143" width="6" height="6" transform="rotate(45 261 146)"/></g>
</svg>

<svg class="a" style="left:65.5px;top:403px" width="270.5" height="144.8" viewBox="416 296 757 403" preserveAspectRatio="none">
 <use href="#dcScene"/>
</svg>

<svg class="a" style="left:65.7px;top:567.2px" width="270.6" height="152.7" viewBox="0 0 270.6 152.7">
 <defs>
  <radialGradient id="g3a" cx=".25" cy=".1" r=".6"><stop offset="0" stop-color="#6a6a6a"/><stop offset="1" stop-color="#202020"/></radialGradient>
  <radialGradient id="g3b" cx=".5" cy=".5" r=".5"><stop offset="0" stop-color="#9a9a9a"/><stop offset=".7" stop-color="#6a6a6a"/><stop offset="1" stop-color="#3a3a3a" stop-opacity="0"/></radialGradient>
  <linearGradient id="g3c" x1="0" y1="0" x2="0" y2="1"><stop offset="0" stop-color="#9ee8ff"/><stop offset="1" stop-color="#2a80d0"/></linearGradient>
 </defs>
 <filter id="bl3" x="-20%" y="-20%" width="140%" height="140%"><feGaussianBlur stdDeviation="6"/></filter>
 <rect width="270.6" height="152.7" fill="#161616"/>
 <g filter="url(#bl3)">
  <ellipse cx="45" cy="20" rx="60" ry="28" fill="#4c4c4c"/>
  <path d="M70 70 Q110 45 170 40 Q230 38 250 60 Q265 90 230 120 Q200 145 150 140 Q90 130 70 100 Z" fill="#5e5e5e"/>
  <ellipse cx="205" cy="95" rx="30" ry="22" fill="#8a8a8a"/>
  <ellipse cx="130" cy="60" rx="40" ry="14" fill="#6a6a6a"/>
  <ellipse cx="185" cy="32" rx="24" ry="12" fill="#1a1a1a"/>
  <ellipse cx="178" cy="125" rx="28" ry="18" fill="#101010"/>
  <rect x="215" y="60" width="60" height="40" fill="#121212"/>
  <path d="M200 118 L275 110 V140 L210 145 Z" fill="#3a3f58" opacity=".7"/>
 </g>
 <text x="104.6" y="53.1" font-family="Liberation Serif" font-weight="bold" font-size="13.5" fill="url(#g3c)" textLength="63" lengthAdjust="spacingAndGlyphs">TWITCH</text>
 <path d="M49 68 H118.5 V79 H53.5 Z" fill="#2a48c0"/><path d="M55.6 81.9 H118.5 V93 H60 Z" fill="#1f3aa8"/>
 <path d="M153.7 68 H220.4 L216 79 H153.7 Z" fill="#2a48c0"/><path d="M153.7 81.9 H213 L209 93 H153.7 Z" fill="#1f3aa8"/>
 <circle cx="136" cy="80" r="19" fill="#c8c8d0"/><circle cx="136" cy="80" r="16.5" fill="#1e44b0"/>
 <path d="M129 76 Q136 72 143 76 L145 84 Q142 85 139 81 H133 Q130 85 127 84 Z" fill="#8ad0f0"/>
 <g fill="#fff" font-family="Liberation Sans" font-weight="bold">
  <text x="65" y="76.5" font-size="6" textLength="42" lengthAdjust="spacingAndGlyphs">OFFICIAL CHANNEL</text>
  <text x="161" y="76.5" font-size="6" textLength="42" lengthAdjust="spacingAndGlyphs">OFFICIAL CHANNEL</text>
  <text x="71" y="90" font-size="4" textLength="40" lengthAdjust="spacingAndGlyphs">STREAMING EVERY FRIDAY</text>
  <text x="162" y="90" font-size="4" textLength="25" lengthAdjust="spacingAndGlyphs">YOUR CATEGORY</text>
 </g>
 <g fill="none" stroke="#c0d8f0" stroke-width=".8"><rect x="111.5" y="106" width="6" height="6" rx="1.5"/><rect x="121" y="106" width="6" height="6"/><circle cx="133" cy="109" r="3"/></g>
 <rect x="141" y="108" width="24" height="2.2" fill="#7ab8e8"/>
</svg>

<svg class="a" style="left:65.7px;top:738.6px" width="270.6" height="144" viewBox="0 0 270.6 144">
 <defs>
  <linearGradient id="g4a" x1="0" y1="1" x2="1" y2="0"><stop offset="0" stop-color="#1a3aa8"/><stop offset=".45" stop-color="#1a2e98"/><stop offset="1" stop-color="#0c1660"/></linearGradient>
 </defs>
 <rect width="270.6" height="144" fill="url(#g4a)"/>
 <circle cx="64.3" cy="59.9" r="0.58" fill="#e8d890" opacity="0.77"/><circle cx="168.9" cy="7.2" r="0.41" fill="#e8d890" opacity="0.88"/><circle cx="70.0" cy="25.8" r="0.90" fill="#e8d890" opacity="0.71"/><circle cx="225.8" cy="52.4" r="0.72" fill="#e8d890" opacity="0.57"/><circle cx="171.4" cy="95.5" r="0.66" fill="#e8d890" opacity="0.83"/><circle cx="181.3" cy="7.0" r="0.78" fill="#e8d890" opacity="0.77"/><circle cx="81.3" cy="3.4" r="0.83" fill="#e8d890" opacity="0.71"/><circle cx="194.1" cy="96.7" r="0.76" fill="#e8d890" opacity="0.91"/><circle cx="106.6" cy="88.1" r="0.62" fill="#e8d890" opacity="0.92"/><circle cx="237.3" cy="10.7" r="0.47" fill="#e8d890" opacity="0.60"/><circle cx="260.7" cy="48.0" r="0.71" fill="#e8d890" opacity="0.64"/><circle cx="137.0" cy="42.4" r="0.58" fill="#e8d890" opacity="0.76"/><circle cx="157.7" cy="99.5" r="0.74" fill="#e8d890" opacity="0.92"/><circle cx="231.2" cy="109.0" r="0.74" fill="#e8d890" opacity="0.57"/><circle cx="232.4" cy="106.1" r="0.85" fill="#e8d890" opacity="0.76"/><circle cx="192.7" cy="23.2" r="0.82" fill="#e8d890" opacity="0.76"/><circle cx="76.9" cy="7.0" r="0.83" fill="#e8d890" opacity="0.95"/><circle cx="23.9" cy="88.1" r="0.61" fill="#e8d890" opacity="0.57"/><circle cx="79.4" cy="84.6" r="0.84" fill="#e8d890" opacity="0.52"/><circle cx="165.9" cy="4.9" r="0.76" fill="#e8d890" opacity="0.65"/><circle cx="237.8" cy="107.9" r="0.65" fill="#e8d890" opacity="0.95"/><circle cx="83.6" cy="8.5" r="0.70" fill="#e8d890" opacity="0.51"/><circle cx="53.3" cy="44.9" r="0.71" fill="#e8d890" opacity="0.57"/><circle cx="11.5" cy="95.5" r="0.56" fill="#e8d890" opacity="0.93"/><circle cx="242.1" cy="41.6" r="0.63" fill="#e8d890" opacity="0.73"/><circle cx="173.8" cy="65.5" r="0.68" fill="#e8d890" opacity="0.78"/><circle cx="254.0" cy="55.8" r="0.62" fill="#e8d890" opacity="0.82"/><circle cx="64.2" cy="33.1" r="0.89" fill="#e8d890" opacity="0.73"/><circle cx="148.1" cy="1.3" r="0.61" fill="#e8d890" opacity="0.76"/><circle cx="5.4" cy="67.7" r="0.72" fill="#e8d890" opacity="0.53"/><circle cx="169.4" cy="51.3" r="0.74" fill="#e8d890" opacity="0.66"/><circle cx="190.9" cy="81.2" r="0.41" fill="#e8d890" opacity="0.53"/><circle cx="182.5" cy="106.0" r="0.53" fill="#e8d890" opacity="0.71"/><circle cx="160.0" cy="35.2" r="0.58" fill="#e8d890" opacity="0.64"/><circle cx="99.7" cy="65.5" r="0.55" fill="#e8d890" opacity="0.67"/><circle cx="208.5" cy="3.0" r="0.68" fill="#e8d890" opacity="0.83"/><circle cx="83.7" cy="24.5" r="0.80" fill="#e8d890" opacity="0.61"/><circle cx="50.6" cy="47.9" r="0.75" fill="#e8d890" opacity="0.55"/><circle cx="86.9" cy="36.7" r="0.82" fill="#e8d890" opacity="0.70"/><circle cx="231.0" cy="18.6" r="0.57" fill="#e8d890" opacity="0.79"/><circle cx="238.9" cy="49.6" r="0.51" fill="#e8d890" opacity="0.55"/><circle cx="143.0" cy="21.0" r="0.80" fill="#e8d890" opacity="0.88"/><circle cx="49.6" cy="30.6" r="0.80" fill="#e8d890" opacity="0.79"/><circle cx="217.7" cy="38.0" r="0.46" fill="#e8d890" opacity="0.63"/><circle cx="214.3" cy="29.8" r="0.57" fill="#e8d890" opacity="0.69"/><circle cx="113.3" cy="45.0" r="0.86" fill="#e8d890" opacity="0.57"/><circle cx="1.3" cy="103.8" r="0.84" fill="#e8d890" opacity="0.94"/><circle cx="117.3" cy="104.5" r="0.86" fill="#e8d890" opacity="0.60"/><circle cx="201.3" cy="92.0" r="0.73" fill="#e8d890" opacity="0.73"/><circle cx="78.0" cy="37.5" r="0.51" fill="#e8d890" opacity="0.53"/><circle cx="158.9" cy="31.6" r="0.81" fill="#e8d890" opacity="0.52"/><circle cx="244.0" cy="76.3" r="0.86" fill="#e8d890" opacity="0.90"/><circle cx="242.9" cy="63.5" r="0.41" fill="#e8d890" opacity="0.84"/><circle cx="46.4" cy="33.0" r="0.73" fill="#e8d890" opacity="0.74"/><circle cx="111.7" cy="103.3" r="0.71" fill="#e8d890" opacity="0.65"/><circle cx="68.2" cy="94.8" r="0.64" fill="#e8d890" opacity="0.85"/><circle cx="95.0" cy="21.7" r="0.67" fill="#e8d890" opacity="0.87"/><circle cx="46.3" cy="87.1" r="0.86" fill="#e8d890" opacity="0.86"/><circle cx="222.3" cy="0.8" r="0.71" fill="#e8d890" opacity="0.89"/><circle cx="13.5" cy="29.9" r="0.53" fill="#e8d890" opacity="0.74"/><circle cx="114.2" cy="52.0" r="0.79" fill="#e8d890" opacity="0.50"/><circle cx="14.8" cy="14.0" r="0.46" fill="#e8d890" opacity="0.53"/><circle cx="263.2" cy="94.0" r="0.44" fill="#e8d890" opacity="0.73"/><circle cx="85.3" cy="34.6" r="0.58" fill="#e8d890" opacity="0.79"/><circle cx="158.4" cy="39.7" r="0.50" fill="#e8d890" opacity="0.65"/><circle cx="33.4" cy="61.1" r="0.76" fill="#e8d890" opacity="0.67"/><circle cx="21.6" cy="19.6" r="0.59" fill="#e8d890" opacity="0.77"/><circle cx="211.3" cy="41.8" r="0.80" fill="#e8d890" opacity="0.78"/><circle cx="116.5" cy="41.0" r="0.65" fill="#e8d890" opacity="0.82"/><circle cx="113.5" cy="76.4" r="0.63" fill="#e8d890" opacity="0.61"/><circle cx="144.7" cy="76.5" r="0.44" fill="#e8d890" opacity="0.69"/><circle cx="115.0" cy="96.8" r="0.87" fill="#e8d890" opacity="0.67"/><circle cx="242.4" cy="87.0" r="0.53" fill="#e8d890" opacity="0.71"/><circle cx="33.2" cy="89.5" r="0.73" fill="#e8d890" opacity="0.90"/><circle cx="214.0" cy="73.4" r="0.77" fill="#e8d890" opacity="0.75"/><circle cx="27.8" cy="64.7" r="0.40" fill="#e8d890" opacity="0.56"/><circle cx="209.1" cy="4.9" r="0.45" fill="#e8d890" opacity="0.54"/><circle cx="237.7" cy="19.7" r="0.41" fill="#e8d890" opacity="0.88"/><circle cx="32.7" cy="92.8" r="0.74" fill="#e8d890" opacity="0.88"/><circle cx="257.2" cy="63.7" r="0.80" fill="#e8d890" opacity="0.52"/><circle cx="207.2" cy="56.2" r="0.76" fill="#e8d890" opacity="0.55"/><circle cx="202.2" cy="102.8" r="0.43" fill="#e8d890" opacity="0.65"/><circle cx="152.3" cy="91.1" r="0.52" fill="#e8d890" opacity="0.58"/><circle cx="67.5" cy="67.8" r="0.78" fill="#e8d890" opacity="0.68"/><circle cx="99.2" cy="43.6" r="0.58" fill="#e8d890" opacity="0.69"/><circle cx="22.5" cy="55.0" r="0.89" fill="#e8d890" opacity="0.69"/><circle cx="201.8" cy="17.7" r="0.75" fill="#e8d890" opacity="0.84"/><circle cx="181.9" cy="56.9" r="0.64" fill="#e8d890" opacity="0.79"/><circle cx="242.3" cy="16.4" r="0.45" fill="#e8d890" opacity="0.84"/><circle cx="247.5" cy="56.9" r="0.62" fill="#e8d890" opacity="0.82"/><circle cx="50.2" cy="29.4" r="0.50" fill="#e8d890" opacity="0.76"/><circle cx="85.0" cy="25.6" r="0.75" fill="#e8d890" opacity="0.93"/><circle cx="79.9" cy="77.6" r="0.61" fill="#e8d890" opacity="0.88"/><circle cx="157.9" cy="29.4" r="0.51" fill="#e8d890" opacity="0.51"/><circle cx="129.5" cy="42.1" r="0.49" fill="#e8d890" opacity="0.66"/><circle cx="87.0" cy="85.2" r="0.47" fill="#e8d890" opacity="0.95"/><circle cx="129.5" cy="65.9" r="0.63" fill="#e8d890" opacity="0.88"/><circle cx="221.8" cy="61.3" r="0.64" fill="#e8d890" opacity="0.82"/><circle cx="231.3" cy="44.0" r="0.77" fill="#e8d890" opacity="0.93"/><circle cx="126.2" cy="25.3" r="0.52" fill="#e8d890" opacity="0.82"/><circle cx="182.3" cy="105.5" r="0.83" fill="#e8d890" opacity="0.61"/><circle cx="51.2" cy="28.4" r="0.49" fill="#e8d890" opacity="0.82"/><circle cx="231.8" cy="99.0" r="0.53" fill="#e8d890" opacity="0.89"/><circle cx="84.6" cy="46.6" r="0.76" fill="#e8d890" opacity="0.54"/><circle cx="25.0" cy="91.7" r="0.55" fill="#e8d890" opacity="0.66"/><circle cx="156.7" cy="74.3" r="0.40" fill="#e8d890" opacity="0.65"/><circle cx="117.8" cy="53.4" r="0.51" fill="#e8d890" opacity="0.76"/><circle cx="257.9" cy="43.0" r="0.67" fill="#e8d890" opacity="0.55"/><circle cx="74.2" cy="73.2" r="0.46" fill="#e8d890" opacity="0.90"/><circle cx="245.4" cy="10.7" r="0.87" fill="#e8d890" opacity="0.67"/>
<circle cx="87.4" cy="18.1" r="0.66" fill="#d8c880" opacity="0.44"/><circle cx="144.7" cy="43.9" r="0.42" fill="#d8c880" opacity="0.65"/><circle cx="10.1" cy="52.0" r="0.43" fill="#d8c880" opacity="0.45"/><circle cx="114.6" cy="99.2" r="0.45" fill="#d8c880" opacity="0.51"/><circle cx="169.4" cy="113.7" r="0.63" fill="#d8c880" opacity="0.60"/><circle cx="263.6" cy="5.6" r="0.74" fill="#d8c880" opacity="0.54"/><circle cx="38.9" cy="14.1" r="0.52" fill="#d8c880" opacity="0.81"/><circle cx="48.8" cy="69.8" r="0.66" fill="#d8c880" opacity="0.59"/><circle cx="147.9" cy="7.5" r="0.42" fill="#d8c880" opacity="0.50"/><circle cx="183.7" cy="51.3" r="0.53" fill="#d8c880" opacity="0.69"/><circle cx="122.4" cy="36.0" r="0.72" fill="#d8c880" opacity="0.75"/><circle cx="65.9" cy="68.9" r="0.61" fill="#d8c880" opacity="0.84"/><circle cx="197.0" cy="34.6" r="0.79" fill="#d8c880" opacity="0.46"/><circle cx="112.9" cy="90.9" r="0.46" fill="#d8c880" opacity="0.64"/><circle cx="10.6" cy="80.2" r="0.71" fill="#d8c880" opacity="0.69"/><circle cx="236.4" cy="37.6" r="0.68" fill="#d8c880" opacity="0.70"/><circle cx="156.6" cy="54.7" r="0.74" fill="#d8c880" opacity="0.87"/><circle cx="128.0" cy="79.7" r="0.42" fill="#d8c880" opacity="0.75"/><circle cx="174.7" cy="119.2" r="0.73" fill="#d8c880" opacity="0.54"/><circle cx="104.2" cy="80.2" r="0.41" fill="#d8c880" opacity="0.63"/><circle cx="45.4" cy="14.1" r="0.42" fill="#d8c880" opacity="0.78"/><circle cx="34.9" cy="29.7" r="0.56" fill="#d8c880" opacity="0.84"/><circle cx="21.8" cy="53.9" r="0.62" fill="#d8c880" opacity="0.84"/><circle cx="221.2" cy="103.7" r="0.51" fill="#d8c880" opacity="0.61"/><circle cx="96.9" cy="106.1" r="0.78" fill="#d8c880" opacity="0.48"/><circle cx="47.6" cy="27.8" r="0.49" fill="#d8c880" opacity="0.64"/><circle cx="159.1" cy="31.5" r="0.40" fill="#d8c880" opacity="0.61"/><circle cx="99.7" cy="68.0" r="0.78" fill="#d8c880" opacity="0.75"/><circle cx="139.2" cy="74.1" r="0.67" fill="#d8c880" opacity="0.43"/><circle cx="242.9" cy="93.6" r="0.75" fill="#d8c880" opacity="0.80"/><circle cx="105.9" cy="47.9" r="0.44" fill="#d8c880" opacity="0.72"/><circle cx="16.8" cy="8.1" r="0.48" fill="#d8c880" opacity="0.48"/><circle cx="91.8" cy="6.3" r="0.40" fill="#d8c880" opacity="0.48"/><circle cx="27.4" cy="43.6" r="0.41" fill="#d8c880" opacity="0.84"/><circle cx="165.8" cy="17.8" r="0.50" fill="#d8c880" opacity="0.57"/><circle cx="98.3" cy="14.7" r="0.74" fill="#d8c880" opacity="0.90"/><circle cx="125.8" cy="58.1" r="0.43" fill="#d8c880" opacity="0.45"/><circle cx="92.5" cy="31.8" r="0.73" fill="#d8c880" opacity="0.48"/><circle cx="6.2" cy="114.1" r="0.61" fill="#d8c880" opacity="0.47"/><circle cx="146.7" cy="3.2" r="0.61" fill="#d8c880" opacity="0.89"/><circle cx="233.1" cy="83.5" r="0.50" fill="#d8c880" opacity="0.58"/><circle cx="45.1" cy="92.6" r="0.61" fill="#d8c880" opacity="0.79"/><circle cx="89.0" cy="26.8" r="0.72" fill="#d8c880" opacity="0.89"/><circle cx="230.2" cy="96.7" r="0.73" fill="#d8c880" opacity="0.77"/><circle cx="61.2" cy="62.1" r="0.54" fill="#d8c880" opacity="0.41"/><circle cx="7.5" cy="33.5" r="0.50" fill="#d8c880" opacity="0.75"/><circle cx="258.3" cy="53.7" r="0.77" fill="#d8c880" opacity="0.89"/><circle cx="257.9" cy="43.8" r="0.49" fill="#d8c880" opacity="0.51"/><circle cx="53.1" cy="24.5" r="0.65" fill="#d8c880" opacity="0.85"/><circle cx="226.9" cy="57.5" r="0.66" fill="#d8c880" opacity="0.80"/><circle cx="22.9" cy="79.3" r="0.76" fill="#d8c880" opacity="0.79"/><circle cx="202.5" cy="57.4" r="0.47" fill="#d8c880" opacity="0.79"/><circle cx="89.8" cy="96.1" r="0.79" fill="#d8c880" opacity="0.60"/><circle cx="108.4" cy="113.6" r="0.69" fill="#d8c880" opacity="0.49"/><circle cx="34.3" cy="18.1" r="0.76" fill="#d8c880" opacity="0.80"/><circle cx="39.5" cy="99.2" r="0.79" fill="#d8c880" opacity="0.73"/><circle cx="94.6" cy="65.8" r="0.45" fill="#d8c880" opacity="0.41"/><circle cx="262.1" cy="78.0" r="0.61" fill="#d8c880" opacity="0.87"/><circle cx="117.1" cy="104.6" r="0.73" fill="#d8c880" opacity="0.51"/><circle cx="68.0" cy="35.2" r="0.50" fill="#d8c880" opacity="0.69"/><circle cx="70.0" cy="50.3" r="0.45" fill="#d8c880" opacity="0.86"/><circle cx="95.5" cy="55.0" r="0.63" fill="#d8c880" opacity="0.85"/><circle cx="113.6" cy="110.1" r="0.60" fill="#d8c880" opacity="0.67"/><circle cx="141.3" cy="2.2" r="0.58" fill="#d8c880" opacity="0.49"/><circle cx="1.1" cy="95.9" r="0.47" fill="#d8c880" opacity="0.64"/><circle cx="195.8" cy="66.8" r="0.53" fill="#d8c880" opacity="0.66"/><circle cx="150.0" cy="94.1" r="0.44" fill="#d8c880" opacity="0.68"/><circle cx="67.1" cy="33.2" r="0.71" fill="#d8c880" opacity="0.65"/><circle cx="151.7" cy="91.2" r="0.76" fill="#d8c880" opacity="0.62"/><circle cx="165.4" cy="60.7" r="0.60" fill="#d8c880" opacity="0.75"/><circle cx="122.1" cy="64.0" r="0.59" fill="#d8c880" opacity="0.87"/><circle cx="188.8" cy="105.2" r="0.78" fill="#d8c880" opacity="0.53"/><circle cx="151.1" cy="113.2" r="0.74" fill="#d8c880" opacity="0.47"/><circle cx="32.8" cy="53.1" r="0.43" fill="#d8c880" opacity="0.52"/><circle cx="19.7" cy="80.3" r="0.71" fill="#d8c880" opacity="0.85"/><circle cx="41.7" cy="85.9" r="0.66" fill="#d8c880" opacity="0.47"/><circle cx="238.4" cy="116.1" r="0.49" fill="#d8c880" opacity="0.88"/><circle cx="107.5" cy="58.5" r="0.80" fill="#d8c880" opacity="0.82"/><circle cx="43.6" cy="51.8" r="0.61" fill="#d8c880" opacity="0.57"/><circle cx="52.9" cy="38.2" r="0.69" fill="#d8c880" opacity="0.41"/><circle cx="149.6" cy="52.9" r="0.41" fill="#d8c880" opacity="0.57"/><circle cx="168.5" cy="61.5" r="0.43" fill="#d8c880" opacity="0.89"/><circle cx="212.9" cy="116.6" r="0.44" fill="#d8c880" opacity="0.53"/><circle cx="10.7" cy="93.5" r="0.51" fill="#d8c880" opacity="0.46"/><circle cx="114.0" cy="109.4" r="0.73" fill="#d8c880" opacity="0.53"/><circle cx="40.3" cy="110.3" r="0.63" fill="#d8c880" opacity="0.75"/><circle cx="24.2" cy="6.9" r="0.68" fill="#d8c880" opacity="0.61"/><circle cx="19.6" cy="112.6" r="0.65" fill="#d8c880" opacity="0.80"/><circle cx="22.6" cy="102.7" r="0.43" fill="#d8c880" opacity="0.83"/><circle cx="122.5" cy="40.7" r="0.62" fill="#d8c880" opacity="0.86"/><circle cx="72.3" cy="15.5" r="0.61" fill="#d8c880" opacity="0.52"/><circle cx="29.6" cy="19.4" r="0.42" fill="#d8c880" opacity="0.50"/><circle cx="84.2" cy="36.6" r="0.70" fill="#d8c880" opacity="0.54"/><circle cx="135.0" cy="21.3" r="0.54" fill="#d8c880" opacity="0.41"/><circle cx="67.6" cy="1.8" r="0.69" fill="#d8c880" opacity="0.68"/><circle cx="51.2" cy="57.0" r="0.77" fill="#d8c880" opacity="0.45"/><circle cx="221.1" cy="51.9" r="0.60" fill="#d8c880" opacity="0.82"/><circle cx="106.1" cy="60.8" r="0.68" fill="#d8c880" opacity="0.89"/><circle cx="92.5" cy="99.9" r="0.68" fill="#d8c880" opacity="0.72"/><circle cx="109.3" cy="41.7" r="0.42" fill="#d8c880" opacity="0.46"/><circle cx="19.1" cy="88.9" r="0.50" fill="#d8c880" opacity="0.48"/><circle cx="22.8" cy="101.0" r="0.75" fill="#d8c880" opacity="0.74"/><circle cx="76.1" cy="29.1" r="0.52" fill="#d8c880" opacity="0.63"/><circle cx="42.5" cy="53.5" r="0.51" fill="#d8c880" opacity="0.88"/><circle cx="262.6" cy="65.6" r="0.50" fill="#d8c880" opacity="0.88"/><circle cx="83.6" cy="42.8" r="0.40" fill="#d8c880" opacity="0.59"/><circle cx="128.2" cy="60.3" r="0.48" fill="#d8c880" opacity="0.65"/><circle cx="1.3" cy="31.7" r="0.44" fill="#d8c880" opacity="0.60"/><circle cx="11.3" cy="2.7" r="0.52" fill="#d8c880" opacity="0.52"/><circle cx="158.1" cy="63.5" r="0.70" fill="#d8c880" opacity="0.73"/><circle cx="193.3" cy="105.5" r="0.56" fill="#d8c880" opacity="0.56"/><circle cx="265.9" cy="17.9" r="0.69" fill="#d8c880" opacity="0.72"/><circle cx="11.8" cy="100.2" r="0.76" fill="#d8c880" opacity="0.71"/><circle cx="198.1" cy="97.5" r="0.46" fill="#d8c880" opacity="0.66"/><circle cx="136.2" cy="100.2" r="0.72" fill="#d8c880" opacity="0.81"/><circle cx="157.7" cy="107.1" r="0.67" fill="#d8c880" opacity="0.75"/><circle cx="62.1" cy="3.7" r="0.45" fill="#d8c880" opacity="0.58"/><circle cx="28.3" cy="100.3" r="0.62" fill="#d8c880" opacity="0.71"/><circle cx="169.1" cy="81.7" r="0.60" fill="#d8c880" opacity="0.40"/><circle cx="215.4" cy="89.8" r="0.60" fill="#d8c880" opacity="0.67"/><circle cx="178.0" cy="7.9" r="0.69" fill="#d8c880" opacity="0.53"/><circle cx="20.1" cy="31.9" r="0.69" fill="#d8c880" opacity="0.50"/><circle cx="199.8" cy="117.1" r="0.60" fill="#d8c880" opacity="0.59"/><circle cx="129.3" cy="82.0" r="0.71" fill="#d8c880" opacity="0.71"/><circle cx="173.5" cy="9.3" r="0.46" fill="#d8c880" opacity="0.53"/><circle cx="200.7" cy="36.5" r="0.63" fill="#d8c880" opacity="0.41"/><circle cx="16.4" cy="32.3" r="0.67" fill="#d8c880" opacity="0.75"/><circle cx="182.4" cy="34.9" r="0.61" fill="#d8c880" opacity="0.63"/><circle cx="125.9" cy="14.2" r="0.76" fill="#d8c880" opacity="0.50"/><circle cx="264.1" cy="112.4" r="0.41" fill="#d8c880" opacity="0.63"/><circle cx="221.4" cy="116.2" r="0.58" fill="#d8c880" opacity="0.53"/><circle cx="56.7" cy="113.5" r="0.48" fill="#d8c880" opacity="0.69"/><circle cx="38.3" cy="62.9" r="0.78" fill="#d8c880" opacity="0.47"/><circle cx="221.5" cy="61.0" r="0.75" fill="#d8c880" opacity="0.75"/><circle cx="62.5" cy="107.7" r="0.59" fill="#d8c880" opacity="0.41"/><circle cx="1.0" cy="59.0" r="0.58" fill="#d8c880" opacity="0.55"/><circle cx="38.0" cy="41.3" r="0.53" fill="#d8c880" opacity="0.82"/><circle cx="0.5" cy="90.1" r="0.74" fill="#d8c880" opacity="0.46"/><circle cx="250.1" cy="85.6" r="0.76" fill="#d8c880" opacity="0.54"/><circle cx="100.5" cy="47.1" r="0.80" fill="#d8c880" opacity="0.69"/><circle cx="97.4" cy="51.4" r="0.51" fill="#d8c880" opacity="0.42"/><circle cx="27.5" cy="100.2" r="0.51" fill="#d8c880" opacity="0.87"/><circle cx="67.3" cy="31.9" r="0.60" fill="#d8c880" opacity="0.49"/><circle cx="100.8" cy="114.7" r="0.75" fill="#d8c880" opacity="0.81"/><circle cx="170.3" cy="109.6" r="0.78" fill="#d8c880" opacity="0.67"/><circle cx="194.3" cy="5.9" r="0.69" fill="#d8c880" opacity="0.63"/><circle cx="203.2" cy="77.3" r="0.51" fill="#d8c880" opacity="0.42"/><circle cx="250.2" cy="15.3" r="0.59" fill="#d8c880" opacity="0.57"/><circle cx="80.4" cy="88.7" r="0.79" fill="#d8c880" opacity="0.53"/><circle cx="177.1" cy="36.1" r="0.62" fill="#d8c880" opacity="0.60"/><circle cx="45.2" cy="19.4" r="0.48" fill="#d8c880" opacity="0.85"/><circle cx="134.2" cy="26.4" r="0.76" fill="#d8c880" opacity="0.90"/><circle cx="121.5" cy="16.8" r="0.48" fill="#d8c880" opacity="0.45"/><circle cx="92.3" cy="10.9" r="0.50" fill="#d8c880" opacity="0.53"/><circle cx="153.8" cy="106.5" r="0.70" fill="#d8c880" opacity="0.61"/><circle cx="111.7" cy="62.9" r="0.55" fill="#d8c880" opacity="0.57"/><circle cx="16.8" cy="33.3" r="0.79" fill="#d8c880" opacity="0.46"/><circle cx="135.9" cy="75.6" r="0.75" fill="#d8c880" opacity="0.51"/><circle cx="73.2" cy="29.8" r="0.56" fill="#d8c880" opacity="0.62"/><circle cx="257.6" cy="101.8" r="0.75" fill="#d8c880" opacity="0.41"/><circle cx="8.7" cy="85.1" r="0.76" fill="#d8c880" opacity="0.64"/><circle cx="158.5" cy="0.0" r="0.56" fill="#d8c880" opacity="0.86"/><circle cx="222.9" cy="102.7" r="0.79" fill="#d8c880" opacity="0.52"/><circle cx="29.4" cy="18.5" r="0.61" fill="#d8c880" opacity="0.74"/><circle cx="254.2" cy="86.6" r="0.66" fill="#d8c880" opacity="0.78"/><circle cx="123.5" cy="66.2" r="0.42" fill="#d8c880" opacity="0.79"/><circle cx="62.8" cy="110.4" r="0.66" fill="#d8c880" opacity="0.55"/><circle cx="34.6" cy="30.2" r="0.65" fill="#d8c880" opacity="0.75"/><circle cx="30.3" cy="8.4" r="0.61" fill="#d8c880" opacity="0.69"/><circle cx="104.8" cy="26.8" r="0.64" fill="#d8c880" opacity="0.41"/>
 <rect x="62" y="40.7" width="146.3" height="45.8" fill="#000"/>
 <text x="102" y="51" font-family="Liberation Sans" font-size="6.2" fill="#fff" textLength="66" lengthAdjust="spacingAndGlyphs">DAVE LAMARCK PRESENTS</text>
 <text x="68.9" y="71.7" font-family="Liberation Sans" font-weight="bold" font-size="22" fill="#f2d230" textLength="132.6" lengthAdjust="spacingAndGlyphs">GAMEING AT NIGHT</text>
 <g fill="none" stroke="#fff" stroke-width=".7"><rect x="88.5" y="78" width="4.5" height="4.5" rx="1.2"/><circle cx="138.5" cy="80.3" r="2.3"/><rect x="161" y="78" width="4" height="4.5"/></g>
 <rect x="112" y="78" width="4.5" height="4.5" fill="#fff"/>
 <g fill="#fff" opacity=".85"><rect x="94.5" y="79.6" width="13" height="1.5"/><rect x="118" y="79.6" width="15" height="1.5"/><rect x="142" y="79.6" width="15" height="1.5"/><rect x="167" y="79.6" width="15" height="1.5"/></g>
 <path d="M0 125 Q40 112 75 109 Q105 108 130 122 Q170 118 205 110 V75 H215 V70 H227 V80 H233 V68 H244 V83 H250 V66 H260 V84 H270.6 V144 H0 Z" fill="#000"/>
 <path d="M27 95 L30 88 L33 95 L36 86 L39 94 L42 87 L46 95 L49 88 L52 96 L56 89 L60 97 L64 92 L70 112 H25 Z" fill="#050510"/>
 <g fill="#d8d8e8"><rect x="213" y="76" width="4" height="5"/><rect x="213" y="84" width="3" height="5"/><rect x="235" y="74" width="3" height="5"/><rect x="236" y="83" width="2" height="5"/><rect x="242" y="78" width="4" height="5"/><rect x="242" y="85" width="3" height="5"/><rect x="252" y="71" width="3" height="5"/><rect x="252" y="79" width="3" height="5"/><rect x="253" y="86" width="1.5" height="4"/></g>
 <rect x="23" y="36" width="2.4" height="88" fill="#000"/>
 <path d="M17 22 L21 14 H27 L31 22 Z" fill="#000"/><rect x="18" y="22" width="12" height="12" fill="#f8f0c8"/><path d="M17 34 H31 L28 37 H20 Z" fill="#000"/>
</svg>

<!-- collapse handle -->
<div class="a" style="left:353.5px;top:467px;width:11.5px;height:62px;background:#626476;border-radius:0 8px 8px 0"></div>
<svg class="a" style="left:355px;top:492px" width="10" height="12" viewBox="355 492 10 12"><path d="M361.5 494.5 L358 498 L361.5 501.5" fill="none" stroke="#fff" stroke-width="1.2"/></svg>

<!-- zoom control -->
<div class="a" style="left:1084.5px;top:900.5px;width:144.5px;height:31.5px;background:#444;border-radius:16px"></div>
<svg class="a" style="left:1084px;top:900px" width="146" height="33" viewBox="1084 900 146 33">
 <path d="M1109.7 901 V932 M1176.3 901 V932 M1202.3 901 V932" stroke="#3a3a3a" stroke-width="1"/>
 <path d="M1091.5 916.3 H1102" stroke="#e0e0e0" stroke-width="1.3"/>
 <path d="M1184 916.3 H1194.5 M1189.25 911 V921.5" stroke="#f0f0f0" stroke-width="1.5"/>
 <path d="M1154 918 L1157.3 914.3 L1160.6 918 Z" fill="#f0f0f0"/>
 <path d="M1212.5 920.5 Q1210 917 1211.5 916.3 Q1212.8 915.8 1214.3 918 V910.8 Q1214.3 909.5 1215.3 909.5 Q1216.3 909.5 1216.3 910.8 V916 V909.6 Q1216.3 908.3 1217.3 908.3 Q1218.3 908.3 1218.3 909.6 V916 V910.2 Q1218.3 909 1219.3 909 Q1220.3 909 1220.3 910.2 V916 V911.5 Q1220.3 910.5 1221.3 910.5 Q1222.2 910.5 1222.2 911.5 V919 Q1222.2 923.8 1218 923.8 H1216.5 Q1214.3 923.8 1212.5 920.5 Z" fill="#ececec"/>
</svg>
<div class="t" id="zPct" style="left:1121px;top:909.5px;font-size:13px;color:#f0f0f0;letter-spacing:0.5px">81%</div>

<!-- inspector tab -->
<div class="a" style="left:1222.8px;top:792px;width:18px;height:83px;background:#3f4155;border-radius:9px 0 0 9px"></div>
<svg class="a" style="left:1225px;top:798px" width="12" height="13" viewBox="1225 798 12 13"><path d="M1229.2 802 L1232.6 805.2 L1229.2 808.4" fill="none" stroke="#fff" stroke-width="1.1"/></svg>
<div class="t" id="tabIns" style="left:1237px;top:815.5px;font-size:12px;color:#f0f0f0;transform:rotate(90deg);transform-origin:0 0">Inspector</div>
</body></html>
